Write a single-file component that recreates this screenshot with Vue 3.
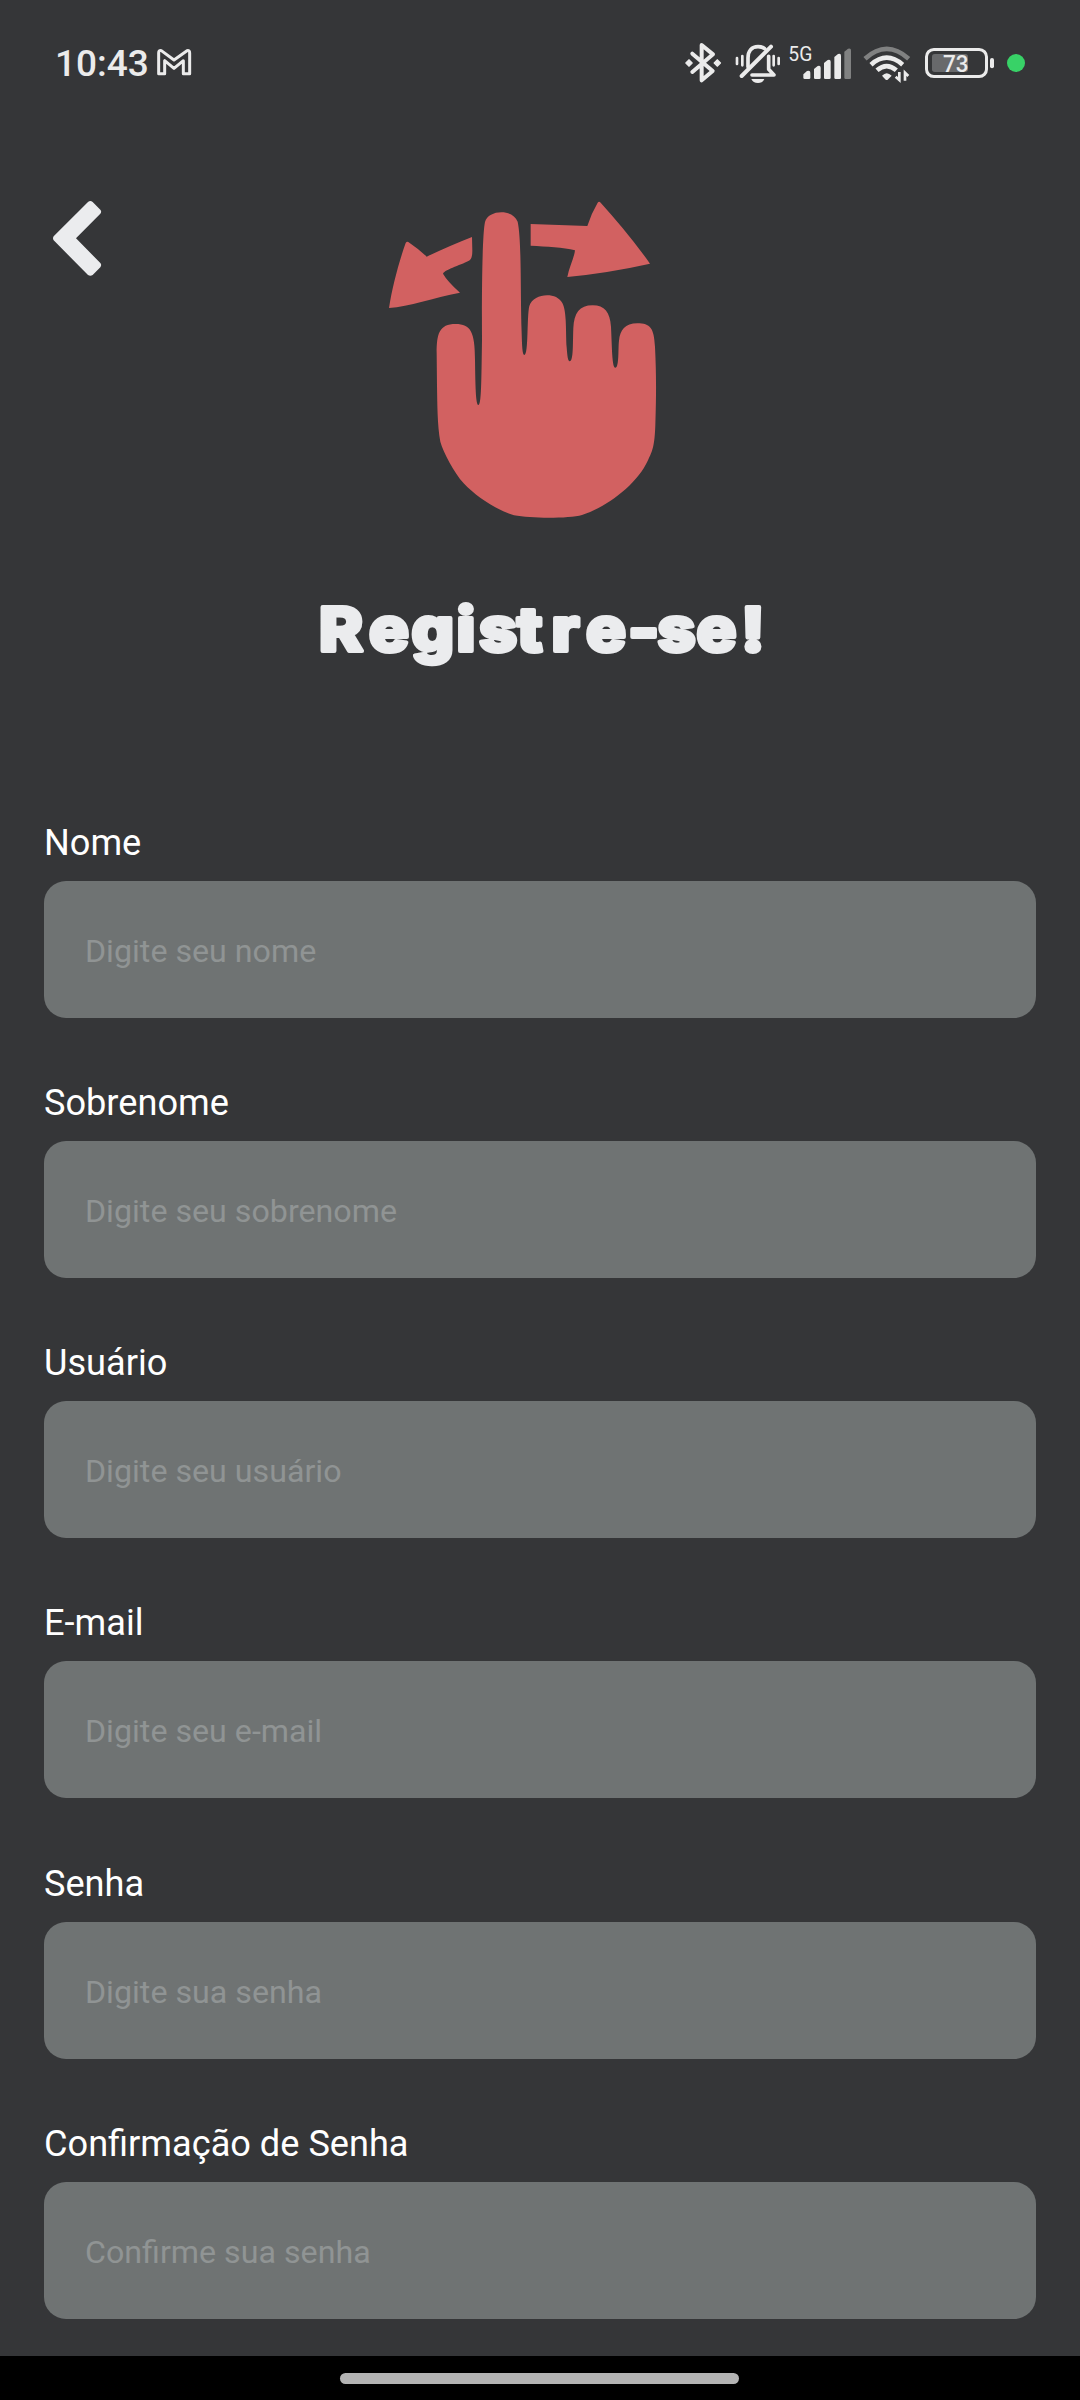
<script setup>
const fields = [
  { id: 'nome', label: 'Nome', placeholder: 'Digite seu nome' },
  { id: 'sobrenome', label: 'Sobrenome', placeholder: 'Digite seu sobrenome' },
  { id: 'usuario', label: 'Usuário', placeholder: 'Digite seu usuário' },
  { id: 'email', label: 'E-mail', placeholder: 'Digite seu e-mail' },
  { id: 'senha', label: 'Senha', placeholder: 'Digite sua senha', type: 'password' },
  { id: 'confirmacao', label: 'Confirmação de Senha', placeholder: 'Confirme sua senha', type: 'password' },
]

// The title is drawn with widened letters, so the pen positions are divided by the same factor.
const stretch = 1.09
const titleX = [19, 69, 111.5, 156.5, 179, 217, 251.5, 286, 328, 357.5, 396.5, 441]
  .map((x) => (x / stretch).toFixed(2))
  .join(' ')
</script>

<template>
  <div class="screen">
    <div class="status">
      <span class="time">10:43</span>
      <svg class="mail" width="40" height="80" viewBox="375 15 120 240">
        <path d="M386 161V99Q386 90 394 92L432 120L471 92Q479 90 479 99V161H460V122L432 145L404 122V161Z" fill="none" stroke="#ebebeb" stroke-width="9" stroke-linejoin="round" />
      </svg>
      <div class="indicators">
        <svg width="40" height="80" viewBox="42 0 120 240">
          <path d="M67 86L128 138L95 166V60L129 88L67 141" fill="none" stroke="#ebebeb" stroke-width="12" stroke-linejoin="round" stroke-linecap="round" />
          <path d="M57 105L66 114L57 123L48 114ZM142 105L151 114L142 123L133 114Z" fill="#ebebeb" stroke="#ebebeb" stroke-width="5" stroke-linejoin="round" />
        </svg>
        <svg class="bell" width="50" height="80" viewBox="192 0 150 240">
          <g fill="none" stroke="#ebebeb" stroke-linecap="round" stroke-linejoin="round">
            <path d="M234 125V99C234 78 245 65 264 65C272 65 279 67 284 71" stroke-width="11" />
            <path d="M246 150H312L296 133V94" stroke-width="11" />
            <path d="M215 153L303 65" stroke-width="12" />
            <path d="M201 99V117M217 93V121M311 93V121M326 99V117" stroke-width="8" />
          </g>
          <path d="M244 162H283Q278 174 264 174Q249 174 244 162Z" fill="#ebebeb" />
        </svg>
        <svg width="70" height="80" viewBox="342 0 210 240">
          <text x="355" y="108" class="svg-text" font-size="59" textLength="72" lengthAdjust="spacingAndGlyphs">5G</text>
          <g fill="#ebebeb">
            <path d="M400 158V148L411 138Q421 135 421 143V158Q421 162 417 162H404Q400 162 400 158Z" />
            <path d="M432 158V132L443 123Q452 120 452 128V158Q452 162 448 162H436Q432 162 432 158Z" />
            <path d="M462 158V114L473 105Q482 102 482 110V158Q482 162 478 162H466Q462 162 462 158Z" />
            <path d="M493 158V96L504 87Q513 84 513 92V158Q513 162 509 162H497Q493 162 493 158Z" />
            <path d="M523 158V80L534 71Q543 68 543 76V158Q543 162 539 162H527Q523 162 523 158Z" fill="#808181" />
          </g>
        </svg>
        <svg class="wifi" width="50" height="80" viewBox="36 0 150 240">
          <g fill="none" stroke="#ebebeb" stroke-width="14">
            <path d="M45 101Q110 42 176 101" stroke="#808181" />
            <path d="M63 119Q110 77 158 119" />
            <path d="M81 136Q110 111 139 136" />
          </g>
          <path d="M96 152Q110 137 125 152L113 164Q110 166 107 164Z" fill="#ebebeb" />
          <path d="M148 141V165L137 155M165 167V143L175 153" fill="none" stroke="#ebebeb" stroke-width="8" />
        </svg>
        <svg class="battery" width="73" height="80" viewBox="219 0 219 240">
          <rect x="229.500" y="73.500" width="180" height="81" rx="22" fill="none" stroke="#ebebeb" stroke-width="9" />
          <rect x="246" y="87" width="108" height="54" rx="8" fill="#68696b" />
          <rect x="420" y="99" width="12" height="31" rx="6" fill="#ebebeb" />
          <text x="279" y="140" class="svg-text" font-size="69" font-weight="500" textLength="77" lengthAdjust="spacingAndGlyphs">73</text>
        </svg>
        <span class="dot"></span>
      </div>
    </div>

    <header class="hero">
      <svg class="back" width="100" height="110" viewBox="0 0 300 330">
        <path d="M174 66Q181 60 188 66L211 89Q216 95 211 101L138 175L211 249Q216 255 211 262L188 285Q181 290 174 285L71 181Q67 175 71 169Z" fill="#ebecee" />
      </svg>
      <svg class="hand" width="310" height="350" viewBox="0 0 930 1050">
        <g fill="#d26161">
          <path d="M107 189Q111 182 118 188Q148 208 170 230Q242 196 306 171L307 212Q307 235 299 241C280 253 225 268 219 281Q232 304 270 338C190 353 118 380 57 384C67 320 87 245 107 189Z" />
          <path d="M482 132L652 138Q663 102 683 68Q687 62 692 68C740 122 793 184 840 251Q720 278 592 291C597 262 613 232 615 211C580 201 530 200 482 197Z" />
          <path d="M200 520C200 462 207 432 257 432C302 432 315 456 315 540C316 610 317 675 325 675C334 675 334 610 336 480C335 330 337 160 345 126C350 107 372 97 394 97C419 97 435 108 443 125C455 180 451 340 455 460C456 495 457 525 463 525C476 525 470 410 478 378C485 357 508 346 531 346C552 346 567 353 577 369C591 395 587 460 590 502C592 529 594 544 599 544C611 544 608 485 610 444C612 400 628 376 668 376C704 376 720 397 723 440C726 500 726 563 736 563C748 563 744 505 747 482C750 450 765 430 802 430C841 430 852 444 855 500C859 580 859 640 856 735C854 796 848 812 834 841C800 915 712 980 636 1005C596 1016 485 1016 432 1006C375 988 317 948 281 910C252 877 220 818 211 785C202 735 202 670 201 620Z" />
        </g>
      </svg>
    </header>

    <h1 class="title">
      <svg width="480" height="110" viewBox="0 0 480 110">
        <text :x="titleX" y="71" :transform="`scale(${stretch} 1)`" class="title-text">Registre-se!</text>
      </svg>
    </h1>

    <form class="form">
      <div v-for="f in fields" :key="f.id" class="field">
        <label :for="f.id">{{ f.label }}</label>
        <input :id="f.id" :type="f.type || 'text'" :placeholder="f.placeholder" autocomplete="off" />
      </div>
    </form>

    <div class="navbar"><span class="pill"></span></div>
  </div>
</template>

<style>
body {
  margin: 0;
  background: #353638;
}
</style>

<style scoped>
.screen {
  box-sizing: border-box;
  width: 1080px;
  height: 2400px;
  display: flex;
  flex-direction: column;
  overflow: hidden;
  background: #353638;
  font-family: Roboto, "Liberation Sans", sans-serif;
}
svg {
  display: block;
  flex: none;
}
.status {
  display: flex;
  align-items: center;
  height: 80px;
  padding: 25px 54px 0 55px;
}
.time {
  width: 100px;
  padding-bottom: 2px;
  color: #ebebeb;
  font-size: 37px;
  font-weight: 500;
  line-height: 44px;
  white-space: nowrap;
}
.indicators {
  display: flex;
  align-items: center;
  margin-left: auto;
}
.bell {
  margin-left: 10px;
}
.wifi {
  margin-left: 8px;
}
.battery {
  margin-left: 11px;
}
.svg-text {
  fill: #ebebeb;
  font-family: Roboto, "Liberation Sans", sans-serif;
}
.dot {
  width: 18px;
  height: 18px;
  margin: 0 1px 4px 11px;
  border-radius: 50%;
  background: #38d267;
}
.hero {
  display: flex;
  align-items: flex-start;
  gap: 240px;
  height: 350px;
  padding: 75px 0 0 30px;
}
.title {
  display: flex;
  justify-content: center;
  height: 110px;
  margin: 50px 0 0;
}
.title-text {
  fill: #ebecee;
  stroke: #ebecee;
  stroke-width: 4px;
  stroke-linejoin: round;
  font-family: Inter, "Open Sans", sans-serif;
  font-size: 61px;
  font-weight: 800;
}
.form {
  display: flex;
  flex-direction: column;
  flex: 1;
  gap: 63.16px;
  padding: 131px 44px 0;
}
.field {
  display: flex;
  flex-direction: column;
  height: 197px;
}
label {
  height: 60px;
  color: #fff;
  font-size: 36.15px;
  line-height: 44px;
}
input {
  box-sizing: border-box;
  width: 100%;
  height: 137px;
  padding: 3px 41px 0;
  border: 0;
  border-radius: 22px;
  outline: 0;
  background: #6f7373;
  color: #fff;
  font-family: inherit;
  font-size: 32.2px;
}
input::placeholder {
  color: #909494;
  opacity: 1;
}
.navbar {
  display: flex;
  flex: none;
  justify-content: center;
  align-items: flex-start;
  height: 27px;
  padding: 17px 1px 0 0;
  background: #000;
}
.pill {
  width: 399px;
  height: 11px;
  border-radius: 6px;
  background: #b3b3b3;
}
</style>
